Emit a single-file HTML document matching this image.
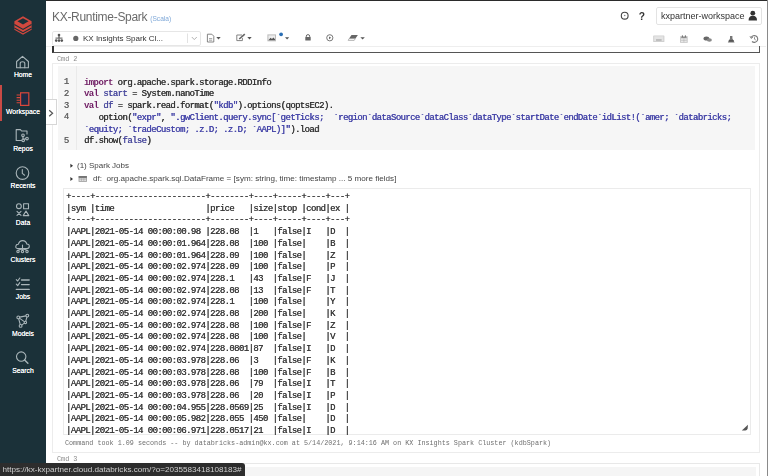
<!DOCTYPE html>
<html><head><meta charset="utf-8">
<style>
*{box-sizing:border-box}
html,body{margin:0;padding:0;width:768px;height:476px;overflow:hidden;background:#fff;font-family:"Liberation Sans",sans-serif}
.abs{position:absolute}
#topline{left:46px;top:0;width:722px;height:1px;background:#2b2b2b}
#rightline{left:767px;top:0;width:1px;height:476px;background:#8a8a8a}
#side{left:0;top:0;width:46px;height:476px;background:#1b3139}
.nav{position:absolute;left:0;width:46px;text-align:center;color:#fff;font-size:6.8px;font-weight:normal;text-shadow:0 0 0.4px #fff}
.nav svg{position:absolute;left:16px}
.mono{font-family:"Liberation Mono",monospace}
#title{left:52px;top:9.5px;font-size:12px;color:#6a6a6a;letter-spacing:-0.3px;white-space:nowrap}
#title small{font-size:6.6px;color:#7fa8d8;letter-spacing:0}
#ws{left:656px;top:7px;width:106px;height:18px;border:1px solid #e3e3e3;border-radius:2px;font-size:9px;color:#333;padding:3px 0 0 4px;white-space:nowrap}
#cluster{left:52px;top:31px;width:149px;height:15px;border:1px solid #e6e6e6;border-radius:2px;font-size:8px;color:#333;white-space:nowrap}
#tbline{left:46px;top:46px;width:720px;height:1px;background:#eeeeee}
#prevcell{left:52px;top:46px;width:708px;height:7px;border:1px solid #555;border-top:none;border-left:2px solid #333}
.cmd{font-family:"Liberation Mono",monospace;font-size:6.8px;color:#888}
#cell{left:52px;top:63px;width:708px;height:390px;border:1px solid #ececec}
#code{left:58px;top:66px;width:697px;height:84px;background:#f6f6f6}
#gutter{left:58px;top:66px;width:19px;height:84px;border-right:1px solid #eaeaea}
.ln{position:absolute;left:58.5px;width:10px;text-align:right;font-family:"Liberation Mono",monospace;font-size:9px;letter-spacing:-0.6px;color:#666;text-shadow:0.3px 0 0 #666}
#src{left:84px;top:77.7px;font-family:"Liberation Mono",monospace;font-size:9px;letter-spacing:-0.607px;line-height:11.7px;color:#333;text-shadow:0.3px 0 0 currentColor;white-space:pre}
.kw{color:#6e1a62;font-weight:bold;text-shadow:none}
.df{color:#4a4a9e;text-shadow:0.3px 0 0 #4a4a9e}
.st{color:#4444a8;text-shadow:0.3px 0 0 #4444a8}
#jobs{left:77px;top:161px;font-size:8px;color:#444;white-space:nowrap}
#dfl{left:93px;top:174px;font-size:8.1px;color:#444;white-space:nowrap}
#out{left:63px;top:188px;width:688px;height:246.5px;border:1px solid #ebebeb;overflow:hidden}
#tbl{left:66px;top:192px;font-family:"Liberation Mono",monospace;font-size:9px;letter-spacing:-0.6px;line-height:11.7px;color:#3a3a3a;text-shadow:0.3px 0 0 #3a3a3a;white-space:pre}
#took{left:65px;top:438.8px;font-family:"Liberation Mono",monospace;font-size:6.76px;color:#6f6f6f;white-space:pre}
#cell3{left:52px;top:463px;width:708px;height:30px;border:1px solid #e8e8e8}
#code3{left:58px;top:466.5px;width:698px;height:20px;background:#f5f5f5}
#status{left:0;top:463px;width:244.5px;height:13px;background:#2d2d2d;border-top-right-radius:3px;color:#cfcfcf;font-size:8.1px;padding:1.8px 0 0 2.4px;white-space:nowrap}
#collapse{left:46px;top:98.5px;width:10.5px;height:26.5px;background:#fff;border:1px solid #d6d6d6;border-left:none}
</style></head><body><div id="wrap" style="position:absolute;left:0;top:0;width:768px;height:476px;filter:blur(0.4px)">
<div class="abs" id="side"></div>
<div class="abs" id="topline"></div>
<div class="abs" id="rightline"></div>

<!-- sidebar -->
<svg class="abs" style="left:0;top:0" width="46" height="380" viewBox="0 0 46 380">
<g>
<path d="M14.4 21.2 L23 16.2 L31.6 21.2 L31.6 29.8 L23 34.7 L14.4 29.8 Z" fill="#d2483e"/>
<path d="M17.4 21.3 L23 18.2 L28.6 21.3 L23 24.4 Z" fill="#1b3139"/>
<path d="M14.4 24.6 L23 29.4 L31.6 24.6" fill="none" stroke="#1b3139" stroke-width="1.2"/>
<path d="M14.4 27.9 L23 32.7 L31.6 27.9" fill="none" stroke="#1b3139" stroke-width="1.1"/>
</g>
<g fill="none" stroke="#a9b5b9" stroke-width="1.1" stroke-linejoin="round" stroke-linecap="round">
<!-- home -->
<path d="M16.6 61.5 L22.5 56.4 L28.4 61.5 V67.8 H16.6 Z"/>
<path d="M20.2 67.8 V63.4 Q20.2 61.8 22.5 61.8 Q24.8 61.8 24.8 63.4 V67.8"/>
<!-- repos -->
<path d="M21.5 140.5 H16.2 V129.6 H20.4 L21.6 131 H27 V134"/>
<circle cx="23" cy="135.3" r="1.3"/>
<circle cx="23.2" cy="140.3" r="1.3"/>
<circle cx="27" cy="138.6" r="1.3"/>
<path d="M23 136.6 V139 M23.5 139.3 L25.8 138.8"/>
<!-- recents -->
<circle cx="22.5" cy="173.1" r="6.3"/>
<path d="M22.3 169.6 V173.4 L24.6 175.2"/>
<!-- data -->
<circle cx="18.9" cy="206.2" r="2.4"/>
<rect x="23.6" y="203.8" width="4.9" height="4.9"/>
<path d="M17 211.3 L21 215.4 M21 211.3 L17 215.4"/>
<path d="M26 211 L28.8 215.6 H23.2 Z"/>
<!-- clusters -->
<path d="M17.8 248.6 Q15.6 248.6 15.8 246.2 Q16.1 244 18.4 244.2 Q19.4 240.6 22.6 240.6 Q26 240.6 26.8 244 Q29.4 244 29.3 246.4 Q29.1 248.6 27 248.6 Z"/>
<path d="M22.5 245 V250.4 M22.5 248.4 L18.3 250.3 M22.5 248.4 L26.8 250.3"/>
<circle cx="18" cy="251.6" r="1.2"/>
<circle cx="22.5" cy="251.6" r="1.2"/>
<circle cx="27" cy="251.6" r="1.2"/>
<!-- jobs -->
<path d="M16.3 279.6 L17.7 281 L19.8 278 M16.3 284.2 L17.7 285.6 L19.8 282.6"/>
<path d="M21.5 280 H29.2 M21.5 284.6 H29.2 M16.3 289.4 H29.2" stroke-width="1.3"/>
<!-- models -->
<path d="M18.3 317.4 L27.3 315.6 L25.4 322.4 Z M18.3 317.4 L20.6 325.9 L25.4 322.4"/>
<circle cx="18.3" cy="317.4" r="1.4" fill="#1b3139"/>
<circle cx="27.3" cy="315.6" r="1.4" fill="#1b3139"/>
<circle cx="25.4" cy="322.4" r="1.2" fill="#1b3139"/>
<circle cx="20.6" cy="325.9" r="1.4" fill="#1b3139"/>
<!-- search -->
<circle cx="21.2" cy="356.6" r="4.7"/>
<path d="M24.6 360 L27.9 363.3" stroke-width="1.4"/>
</g>
<!-- workspace notebook -->
<g fill="none" stroke="#d9473b" stroke-width="1.2">
<rect x="20.6" y="92.8" width="8.2" height="12.6" fill="#1e2b45"/>
<path d="M16.6 95 H21 M16.6 97.6 H21 M16.6 100.2 H21 M16.6 102.8 H21" stroke-width="1.1"/>
</g>
</svg>
<div class="nav" style="top:71px">Home</div>
<div class="nav" style="top:108px">Workspace</div>
<div class="nav" style="top:145px">Repos</div>
<div class="nav" style="top:182px">Recents</div>
<div class="nav" style="top:219px">Data</div>
<div class="nav" style="top:256px">Clusters</div>
<div class="nav" style="top:293px">Jobs</div>
<div class="nav" style="top:330px">Models</div>
<div class="nav" style="top:367px">Search</div>
<div class="abs" style="left:0;top:85px;width:1.6px;height:36px;background:#c84a45"></div>

<div class="abs" id="title">KX-Runtime-Spark <small>(Scala)</small></div>
<div class="abs" id="ws">kxpartner-workspace</div>
<div class="abs" id="cluster"><span style="position:absolute;left:30px;top:2px">KX Insights Spark Cl...</span></div>
<svg class="abs" style="left:0;top:0" width="768" height="50" viewBox="0 0 768 50">
<!-- cluster icon -->
<g fill="#555">
<circle cx="59" cy="35" r="1.3"/>
<rect x="58.4" y="35.5" width="1.2" height="3"/>
<rect x="55.5" y="37.6" width="7" height="1"/>
<circle cx="56.2" cy="40.6" r="1.3"/><circle cx="59" cy="40.6" r="1.3"/><circle cx="61.8" cy="40.6" r="1.3"/>
</g>
<circle cx="75.8" cy="38.4" r="2.6" fill="#666"/>
<path d="M187.5 33.5 V43" stroke="#e2e2e2" stroke-width="1"/>
<path d="M191.8 37 L194.3 39.6 L196.8 37" fill="none" stroke="#aaa" stroke-width="0.9"/>
<!-- doc icon -->
<g fill="none" stroke="#777" stroke-width="0.9">
<path d="M207.4 34.2 H211.8 L213.8 36.2 V42 H207.4 Z"/>
<path d="M209 38.6 H212.2 M209 40.2 H212.2" stroke="#999"/>
</g>
<path d="M216.3 37 H220.7 L218.5 39.4 Z" fill="#555"/>
<!-- edit icon -->
<g fill="none" stroke="#777" stroke-width="0.9">
<path d="M242 35 H236.8 V40.6 H242.4 V38"/>
</g>
<path d="M239.2 39 L244.8 34.2" stroke="#666" stroke-width="1.6"/>
<path d="M247.3 37 H251.7 L249.5 39.4 Z" fill="#555"/>
<!-- image icon -->
<rect x="267.4" y="34.4" width="8.6" height="6.9" fill="#bbb"/>
<rect x="268.4" y="35.4" width="6.6" height="4.9" fill="#eee"/>
<path d="M268.4 40.3 L270.6 37.8 L272 39 L273.4 37.6 L275 39.2 V40.3 Z" fill="#555"/>
<circle cx="281.1" cy="34.3" r="1.9" fill="#2a6fb5"/>
<path d="M285 37.2 H289.2 L287.1 39.5 Z" fill="#555"/>
<!-- lock -->
<path d="M306.3 37.2 V36.2 Q306.3 34.6 308 34.6 Q309.7 34.6 309.7 36.2 V37.2" fill="none" stroke="#666" stroke-width="1"/>
<rect x="305.3" y="37" width="5.4" height="3.6" rx="0.4" fill="#666"/>
<!-- play circle -->
<circle cx="329.8" cy="37.8" r="3.1" fill="none" stroke="#777" stroke-width="1"/>
<path d="M329 36.4 L331.2 37.8 L329 39.2 Z" fill="#666"/>
<!-- eraser -->
<path d="M351.5 35 H357.9 L355.5 38.4 H349.1 Z" fill="#666"/>
<path d="M349.1 38.6 H355.3 L354.2 40.4 H348.2 Z" fill="none" stroke="#999" stroke-width="0.7"/>
<path d="M360.4 37.2 H364.8 L362.6 39.6 Z" fill="#555"/>

<!-- right icons -->
<rect x="653.2" y="35.4" width="11.2" height="6.6" rx="0.6" fill="#cfcfcf"/>
<rect x="654.2" y="36.3" width="9.2" height="4.8" fill="#e4e4e4"/>
<rect x="656" y="39.5" width="5.6" height="1" fill="#999"/>
<g>
<rect x="680.2" y="36.2" width="7.4" height="6.6" fill="#bdbdbd"/>
<rect x="681" y="38.4" width="5.8" height="3.8" fill="#e8e8e8"/>
<path d="M681.4 37.4 H686.4" stroke="#888" stroke-width="1"/>
<path d="M682.4 35.3 V37 M685.4 35.3 V37" stroke="#666" stroke-width="0.9"/>
<path d="M683.9 38.4 V42.2 M681 40.3 H686.8" stroke="#aaa" stroke-width="0.5"/>
</g>
<ellipse cx="706.4" cy="38.6" rx="2.9" ry="2" fill="#666"/>
<ellipse cx="709.4" cy="40" rx="2.5" ry="1.7" fill="#888"/>
<path d="M730 36 H732.4 V38.4 L734.6 42.6 H727.8 L730 38.4 Z" fill="#777"/>
<path d="M728.8 40.8 H733.6" stroke="#555" stroke-width="1.6"/>
<path d="M751.2 37.6 A3.4 3.4 0 1 1 752 41.5" fill="none" stroke="#777" stroke-width="1.1"/>
<path d="M750 36.2 L751.2 38.4 L753 37" fill="none" stroke="#777" stroke-width="0.9"/>
<path d="M754.5 37.2 V39.2 L755.8 40" fill="none" stroke="#777" stroke-width="0.8"/>

<!-- clock & help -->
<circle cx="624.7" cy="15.7" r="3.4" fill="none" stroke="#444" stroke-width="1.1"/>
<circle cx="624.7" cy="15.5" r="0.8" fill="#888"/>
<text x="638.8" y="19.6" font-family="Liberation Sans" font-weight="bold" font-size="10.2" fill="#333">?</text>
<!-- user icon -->
<circle cx="752.8" cy="13.2" r="2.4" fill="#333"/>
<path d="M748.6 20.4 Q748.6 15.8 752.8 15.8 Q757 15.8 757 20.4 Z" fill="#333"/>
</svg>
<div class="abs" id="tbline"></div>
<div class="abs" id="prevcell"></div>
<div class="abs cmd" style="left:57px;top:55px">Cmd 2</div>
<div class="abs" id="cell"></div>
<div class="abs" id="code"></div>
<div class="abs" id="gutter"></div>
<div class="ln" style="top:77.3px">1</div>
<div class="ln" style="top:89px">2</div>
<div class="ln" style="top:100.7px">3</div>
<div class="ln" style="top:112.4px">4</div>
<div class="ln" style="top:135.8px">5</div>
<div class="abs" id="src"><span class="kw">import</span> org.apache.spark.storage.RDDInfo
<span class="kw">val</span> <span class="df">start</span> = System.nanoTime
<span class="kw">val</span> <span class="df">df</span> = spark.read.format(<span class="st">"kdb"</span>).options(qoptsEC2).
   option(<span class="st">"expr"</span>, <span class="st">".gwClient.query.sync[`getTicks;  `region`dataSource`dataClass`dataType`startDate`endDate`idList!(`amer; `databricks;</span>
<span class="st">`equity; `tradeCustom; .z.D; .z.D; `AAPL)]"</span>).load
df.show(<span class="df">false</span>)</div>
<div class="abs" id="collapse"><svg style="position:absolute;left:0;top:0" width="10" height="26" viewBox="46 99 10 26"><path d="M49.2 109.2 L52.6 112.2 L49.2 115.2" fill="none" stroke="#555" stroke-width="1.2"/></svg></div>
<svg class="abs" style="left:60px;top:155px" width="40" height="30" viewBox="60 155 40 30">
<path d="M70.4 163.8 L73 165.8 L70.4 167.8 Z" fill="#333"/>
<path d="M70.4 176.9 L73 178.9 L70.4 180.9 Z" fill="#333"/>
<rect x="78.6" y="176.2" width="8.3" height="5.6" fill="#999"/>
<rect x="78.6" y="176.2" width="8.3" height="1.4" fill="#666"/>
<path d="M79.4 178.4 H86.1 V181 H79.4 Z" fill="#e6e6e6"/>
<path d="M81.5 178.4 V181 M83.8 178.4 V181 M79.4 179.7 H86.1" stroke="#999" stroke-width="0.5"/>
</svg>
<div class="abs" id="jobs">(1) Spark Jobs</div>
<div class="abs" id="dfl">df:&nbsp; org.apache.spark.sql.DataFrame = [sym: string, time: timestamp ... 5 more fields]</div>
<div class="abs" id="out"></div>
<div class="abs" id="tbl">+----+-----------------------+--------+----+-----+----+---+
|sym |time                   |price   |size|stop |cond|ex |
+----+-----------------------+--------+----+-----+----+---+
|AAPL|2021-05-14 00:00:00.98 |228.08  |1   |false|I   |D  |
|AAPL|2021-05-14 00:00:01.964|228.08  |100 |false|    |B  |
|AAPL|2021-05-14 00:00:01.964|228.09  |100 |false|    |Z  |
|AAPL|2021-05-14 00:00:02.974|228.09  |100 |false|    |P  |
|AAPL|2021-05-14 00:00:02.974|228.1   |43  |false|F   |J  |
|AAPL|2021-05-14 00:00:02.974|228.08  |13  |false|F   |T  |
|AAPL|2021-05-14 00:00:02.974|228.1   |100 |false|    |Y  |
|AAPL|2021-05-14 00:00:02.974|228.08  |200 |false|    |K  |
|AAPL|2021-05-14 00:00:02.974|228.08  |100 |false|F   |Z  |
|AAPL|2021-05-14 00:00:02.974|228.08  |100 |false|    |V  |
|AAPL|2021-05-14 00:00:02.974|228.0801|87  |false|I   |D  |
|AAPL|2021-05-14 00:00:03.978|228.06  |3   |false|F   |K  |
|AAPL|2021-05-14 00:00:03.978|228.08  |100 |false|F   |B  |
|AAPL|2021-05-14 00:00:03.978|228.06  |79  |false|I   |T  |
|AAPL|2021-05-14 00:00:03.978|228.06  |20  |false|I   |P  |
|AAPL|2021-05-14 00:00:04.955|228.0569|25  |false|I   |D  |
|AAPL|2021-05-14 00:00:05.982|228.055 |450 |false|    |D  |
|AAPL|2021-05-14 00:00:06.971|228.0517|21  |false|I   |D  |</div>
<svg class="abs" style="left:738px;top:422px" width="12" height="10" viewBox="738 422 12 10"><path d="M741.8 430.6 L748 424.8 L747.6 428.8 Q747 430.4 745.4 430.6 Z" fill="#555"/></svg>
<div class="abs" id="took">Command took 1.09 seconds -- by databricks-admin@kx.com at 5/14/2021, 9:14:16 AM on KX Insights Spark Cluster (kdbSpark)</div>
<div class="abs cmd" style="left:57px;top:455px">Cmd 3</div>
<div class="abs" id="cell3"></div>
<div class="abs" id="code3"></div>
<div class="abs" id="status">https://kx-kxpartner.cloud.databricks.com/?o=2035583418108183#</div>
</div></body></html>
